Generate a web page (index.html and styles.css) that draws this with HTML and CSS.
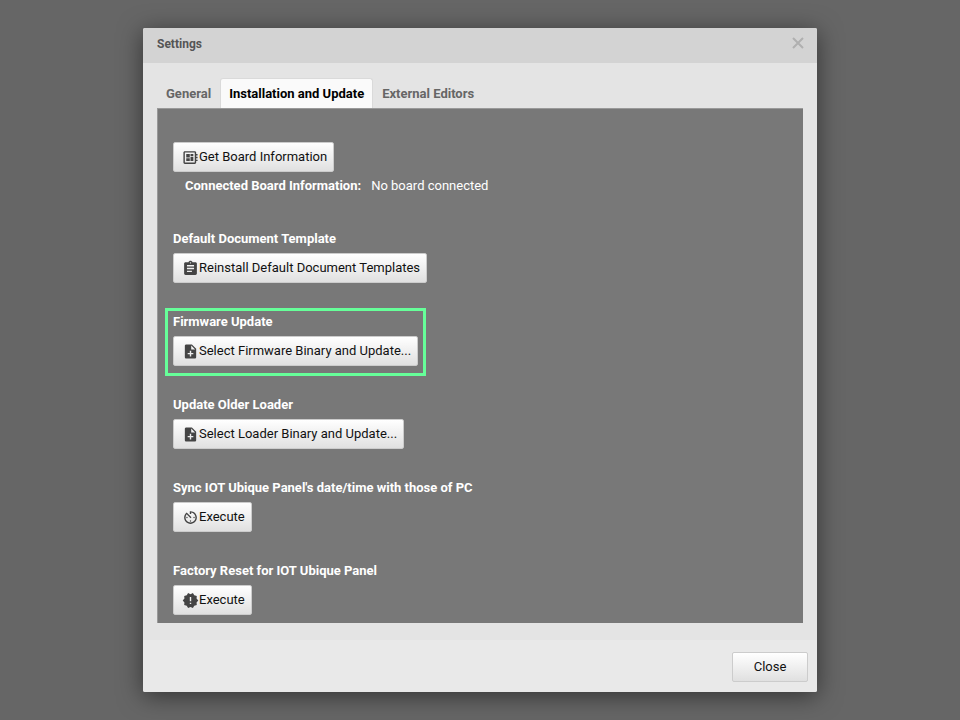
FILE: index.html
```html
<!DOCTYPE html>
<html lang="en">
<head>
<meta charset="utf-8">
<title>Settings</title>
<link rel="stylesheet" href="styles.css">
</head>
<body>
<section class="dialog" role="dialog" aria-labelledby="dialog-title">
  <header class="dialog-header">
    <h1 class="dialog-title" id="dialog-title">Settings</h1>
    <button class="dismiss" type="button" aria-label="Dismiss">
      <svg viewBox="0 0 12 12" aria-hidden="true"><path d="M1 1L11 11M11 1L1 11"/></svg>
    </button>
  </header>
  <div class="dialog-body">
    <nav class="tabs" role="tablist">
      <button class="tab" type="button" role="tab">General</button>
      <button class="tab tab-active" type="button" role="tab" aria-selected="true">Installation and Update</button>
      <button class="tab" type="button" role="tab">External Editors</button>
    </nav>
    <div class="panel" role="tabpanel">
      <div class="board">
        <button class="button" type="button">
          <svg class="icon" viewBox="0 0 24 24" aria-hidden="true"><path d="M22 9V7h-2V5c0-1.100-.9-2-2-2H4c-1.100 0-2 .9-2 2v14c0 1.100.9 2 2 2h14c1.100 0 2-.9 2-2v-2h2v-2h-2v-2h2v-2h-2V9h2zm-4 10H4V5h14v14zM6 13h5v4H6zm6-6h4v3h-4zM6 7h5v5H6zm6 4h4v6h-4z"/></svg>Get Board Information</button>
        <p class="status"><strong>Connected Board Information:</strong><span>No board connected</span></p>
      </div>
      <div class="group">
        <h2 class="group-title">Default Document Template</h2>
        <button class="button" type="button">
          <svg class="icon" viewBox="0 0 24 24" aria-hidden="true"><path d="M19 3h-4.180C14.400 1.840 13.300 1 12 1c-1.300 0-2.400.84-2.820 2H5c-1.100 0-2 .9-2 2v14c0 1.100.9 2 2 2h14c1.100 0 2-.9 2-2V5c0-1.100-.9-2-2-2zm-7 0c.55 0 1 .45 1 1s-.45 1-1 1-1-.45-1-1 .45-1 1-1zm2 14H7v-2h7v2zm3-4H7v-2h10v2zm0-4H7V7h10v2z"/></svg>Reinstall Default Document Templates</button>
      </div>
      <div class="group group-highlight">
        <h2 class="group-title">Firmware Update</h2>
        <button class="button" type="button">
          <svg class="icon" viewBox="0 0 24 24" aria-hidden="true"><path d="M14 2H6c-1.100 0-2 .9-2 2v16c0 1.100.9 2 2 2h12c1.100 0 2-.9 2-2V8l-6-6zm2 14h-3v3h-2v-3H8v-2h3v-3h2v3h3v2zm-3-7V3.500L18.500 9H13z"/></svg>Select Firmware Binary and Update...</button>
      </div>
      <div class="group">
        <h2 class="group-title">Update Older Loader</h2>
        <button class="button" type="button">
          <svg class="icon" viewBox="0 0 24 24" aria-hidden="true"><path d="M14 2H6c-1.100 0-2 .9-2 2v16c0 1.100.9 2 2 2h12c1.100 0 2-.9 2-2V8l-6-6zm2 14h-3v3h-2v-3H8v-2h3v-3h2v3h3v2zm-3-7V3.500L18.500 9H13z"/></svg>Select Loader Binary and Update...</button>
      </div>
      <div class="group">
        <h2 class="group-title">Sync IOT Ubique Panel's date/time with those of PC</h2>
        <button class="button" type="button">
          <svg class="icon" viewBox="0 0 24 24" aria-hidden="true"><path d="M11 17c0 .55.45 1 1 1s1-.45 1-1-.45-1-1-1-1 .45-1 1zm0-14v4h2V5.080c3.390.49 6 3.390 6 6.920 0 3.870-3.130 7-7 7s-7-3.130-7-7c0-1.680.59-3.220 1.580-4.420L12 13l1.410-1.410-6.800-6.800v.02C4.420 6.450 3 9.050 3 12c0 4.970 4.020 9 9 9 4.970 0 9-4.030 9-9s-4.030-9-9-9h-1zm7 9c0-.55-.45-1-1-1s-1 .45-1 1 .45 1 1 1 1-.45 1-1zM6 12c0 .55.45 1 1 1s1-.45 1-1-.45-1-1-1-1 .45-1 1z"/></svg>Execute</button>
      </div>
      <div class="group">
        <h2 class="group-title">Factory Reset for IOT Ubique Panel</h2>
        <button class="button" type="button">
          <svg class="icon" viewBox="0 0 24 24" aria-hidden="true"><path d="M23 12l-2.440-2.780.34-3.680-3.610-.82-1.890-3.180L12 3 8.600 1.540 6.710 4.720l-3.610.81.34 3.680L1 12l2.440 2.780-.34 3.690 3.610.82 1.890 3.180L12 21l3.400 1.460 1.890-3.180 3.610-.82-.34-3.680L23 12zm-10 5h-2v-2h2v2zm0-4h-2V7h2v6z"/></svg>Execute</button>
      </div>
    </div>
  </div>
  <footer class="dialog-footer">
    <button class="button button-close" type="button">Close</button>
  </footer>
</section>
</body>
</html>
```
FILE: styles.css
```css
* {
  box-sizing: border-box;
}

body {
  margin: 0;
  padding: 28px 143px;
  background: #666;
  color: #000;
  font: 13px/16px Roboto, "Liberation Sans", sans-serif;
}

h1, h2, p {
  margin: 0;
}

button {
  font: inherit;
  cursor: pointer;
}

.dialog {
  background: #e4e4e4;
  border-radius: 2px;
  box-shadow: 0 4px 24px rgba(0, 0, 0, 0.5);
}

.dialog-header {
  display: flex;
  align-items: flex-start;
  justify-content: space-between;
  padding: 8px 13px 10px 14px;
  background: #d3d3d3;
  border-radius: 2px 2px 0 0;
}

.dialog-title {
  font-size: 12px;
  line-height: 17px;
  font-weight: 700;
  color: #555;
}

.dismiss {
  display: flex;
  padding: 1px 0 0;
  border: 0;
  background: none;
}

.dismiss svg {
  width: 12px;
  height: 12px;
  fill: none;
  stroke: #b0b0b0;
  stroke-width: 2;
}

.dialog-body {
  padding: 15px 14px 17px;
}

.tabs {
  display: flex;
}

.tab {
  padding: 7px 8px 6px;
  border: 1px solid transparent;
  border-bottom: 0;
  border-radius: 3px 3px 0 0;
  background: none;
  color: #666;
  font-weight: 700;
}

.tab-active {
  border-color: #dadada;
  background: #fafafa;
  color: #000;
}

.panel {
  display: flex;
  flex-direction: column;
  align-items: flex-start;
  gap: 31px;
  padding: 33px 15px 6px;
  border: 1px solid #999;
  border-width: 1px 0 0 1px;
  background: #787878;
  color: #fff;
}

.board {
  display: grid;
  justify-items: start;
  gap: 6px;
  padding-bottom: 8px;
}

.status {
  display: flex;
  gap: 10px;
  padding-left: 12px;
}

.group {
  display: grid;
  justify-items: start;
  gap: 8px;
  padding-bottom: 2px;
}

.group-highlight {
  outline: 3px solid #66ff99;
  outline-offset: 5px;
}

.group-title {
  font-size: 13px;
  line-height: 12px;
  font-weight: 700;
}

.button {
  display: flex;
  align-items: center;
  height: 30px;
  padding: 0 8px;
  border: 1px solid #ccc;
  border-radius: 2px;
  background: linear-gradient(#fff, #e0e0e0);
  color: #111;
}

.panel .button {
  padding-right: 6px;
}

.icon {
  width: 17px;
  height: 17px;
  fill: #444;
}

.dialog-footer {
  display: flex;
  justify-content: flex-end;
  padding: 12px 9px 10px;
  background: #e9e9e9;
  border-radius: 0 0 2px 2px;
}

.button-close {
  justify-content: center;
  min-width: 76px;
}
```
